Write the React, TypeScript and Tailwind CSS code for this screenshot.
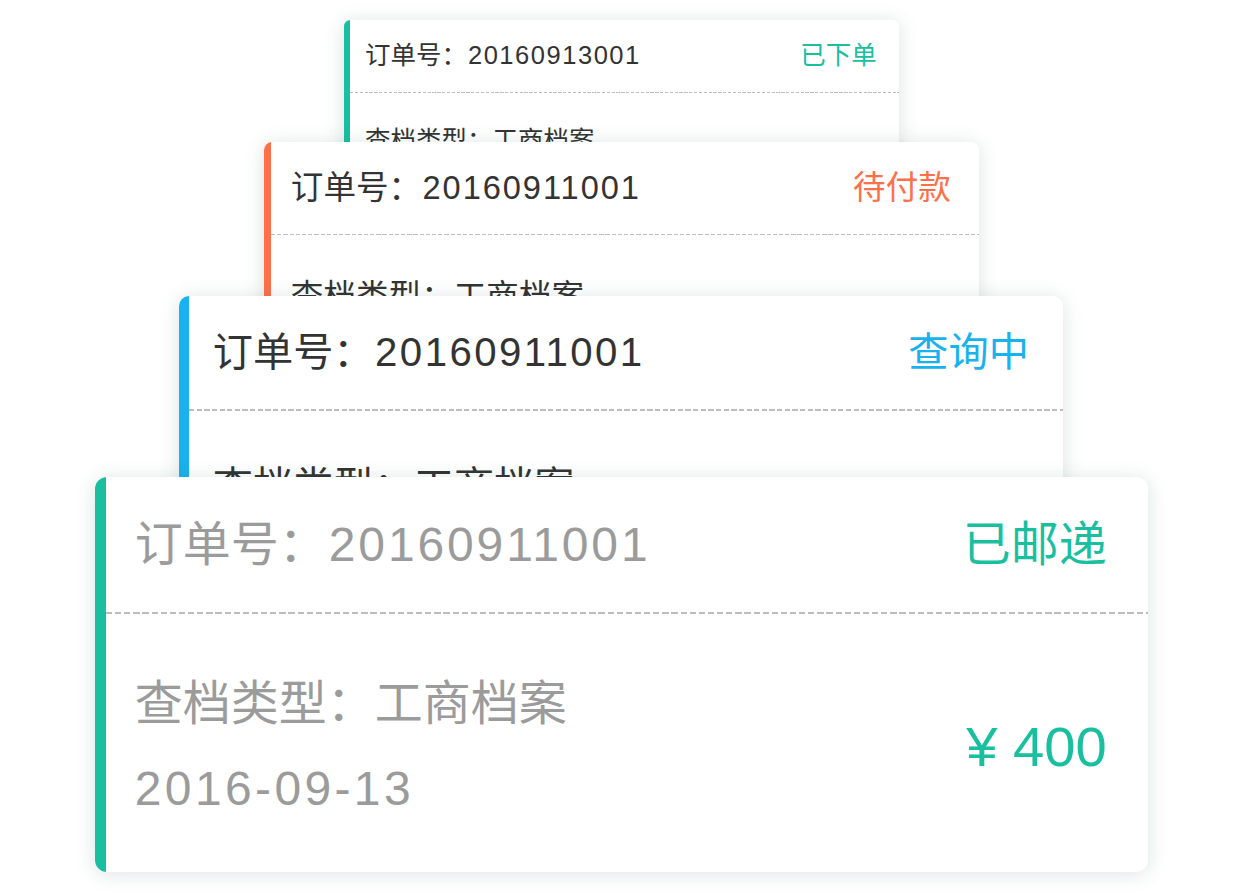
type Order = {
    no: string;
    status: string;
    wrap: string;
    size: string;
    bar: string;
    accent: string;
    text: string;
};

const orders: Order[] = [
    {
        no: "20160913001",
        status: "已下单",
        wrap: "h-[122px]",
        size: "w-[555px] text-[25.5px]",
        bar: "bg-[#19bf9f]",
        accent: "text-[#19bf9f]",
        text: "text-[#333333]",
    },
    {
        no: "20160911001",
        status: "待付款",
        wrap: "h-[154px]",
        size: "w-[715px] text-[32.6px]",
        bar: "bg-[#fd7049]",
        accent: "text-[#fd7049]",
        text: "text-[#333333]",
    },
    {
        no: "20160911001",
        status: "查询中",
        wrap: "h-[181px]",
        size: "w-[884px] text-[40.2px]",
        bar: "bg-[#19b2ee]",
        accent: "text-[#19b2ee]",
        text: "text-[#333333]",
    },
    {
        no: "20160911001",
        status: "已邮递",
        wrap: "",
        size: "w-[1053px] text-[48px]",
        bar: "bg-[#19bf9f]",
        accent: "text-[#19bf9f]",
        text: "text-[#9b9b9b]",
    },
];

const OrderCard = ({ order }: { order: Order }): JSX.Element => (
    <div className={`relative ${order.wrap}`}>
        <div
            className={`flex overflow-hidden rounded-[0.25em] bg-white shadow-[0_2px_20px_rgba(40,90,80,0.16)] ${order.size}`}
        >
            <div className={`w-[0.24em] shrink-0 ${order.bar}`} />
            <div className="min-w-0 flex-1">
                {/* header */}
                <div className="flex h-[2.82em] items-center justify-between pl-[0.6em] pr-[0.85em] leading-none">
                    <span className={order.text}>
                        订单号：<span className="ml-[0.04em] tracking-[0.06em]">{order.no}</span>
                    </span>
                    <span className={order.accent}>{order.status}</span>
                </div>
                <div className="h-[0.04em] bg-[image:repeating-linear-gradient(90deg,#bdbdbd_0_0.13em,transparent_0.13em_0.19em)]" />
                {/* body */}
                <div className="flex items-center justify-between pb-[0.83em] pl-[0.6em] pr-[0.85em] pt-[1em]">
                    <div className={`leading-[1.77em] ${order.text}`}>
                        <div>查档类型：工商档案</div>
                        <div className="tracking-[0.07em]">2016-09-13</div>
                    </div>
                    <div className={`text-[1.17em] leading-none ${order.accent}`}>¥ 400</div>
                </div>
            </div>
        </div>
    </div>
);

const App = (): JSX.Element => {
    return (
        <div className="flex h-[894px] w-full flex-col items-center overflow-hidden bg-white pt-[20px] font-['Liberation_Sans','Noto_Sans_CJK_SC',sans-serif]">
            {orders.map((order, i) => (
                <OrderCard key={i} order={order} />
            ))}
        </div>
    );
};

export default App;
